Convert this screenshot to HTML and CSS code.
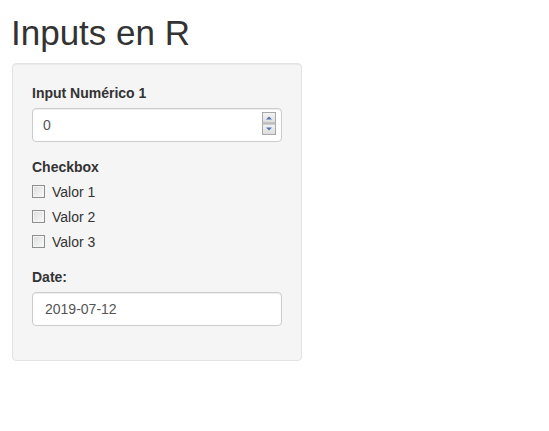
FILE: index.html
```html
<!DOCTYPE html>
<html lang="es">
<head>
<meta charset="utf-8">
<title>Inputs en R</title>
<link rel="stylesheet" href="styles.css">
</head>
<body>
<div class="page">
  <h1 class="title">Inputs en R</h1>
  <div class="well">
    <div class="form-group">
      <label class="control-label">Input Numérico 1</label>
      <div class="form-control number">
        <span>0</span>
        <svg class="spinner" width="14" height="23" viewBox="0 0 14 23">
          <defs>
            <linearGradient id="g" x1="0" y1="0" x2="0" y2="1">
              <stop offset="0" stop-color="#f4f4f4"/>
              <stop offset="1" stop-color="#dcdcdc"/>
            </linearGradient>
          </defs>
          <rect x="0.5" y="0.5" width="13" height="10.5" fill="url(#g)" stroke="#a8a8a8"/>
          <rect x="0.5" y="12" width="13" height="10.5" fill="url(#g)" stroke="#a8a8a8"/>
          <path d="M4 7.5 L7 4.5 L10 7.5 Z" fill="#4d72b8"/>
          <path d="M4 15.5 L7 18.5 L10 15.5 Z" fill="#4d72b8"/>
        </svg>
      </div>
    </div>
    <div class="form-group">
      <label class="control-label">Checkbox</label>
      <div class="options">
        <div class="check-row"><span class="box"></span><span>Valor 1</span></div>
        <div class="check-row"><span class="box"></span><span>Valor 2</span></div>
        <div class="check-row"><span class="box"></span><span>Valor 3</span></div>
      </div>
    </div>
    <div class="form-group">
      <label class="control-label">Date:</label>
      <div class="form-control date">2019-07-12</div>
    </div>
  </div>
</div>
</body>
</html>
```

FILE: styles.css
```css
html, body {
  margin: 0;
  padding: 0;
  background: #ffffff;
}
body {
  font-family: "Liberation Sans", Arial, sans-serif;
  font-size: 14px;
  line-height: 20px;
  color: #333333;
}
.page {
  padding: 0 12px;
}
.title {
  font-size: 35px;
  line-height: 1.1;
  font-weight: normal;
  margin: 14px 0 10px -1px;
  color: #333333;
}
.well {
  width: 290px;
  box-sizing: border-box;
  background: #f5f5f5;
  border: 1px solid #e3e3e3;
  border-radius: 4px;
  padding: 19px;
  box-shadow: inset 0 1px 1px rgba(0, 0, 0, 0.05);
}
.form-group {
  margin-bottom: 15px;
}
.control-label {
  display: block;
  font-weight: bold;
  margin-bottom: 5px;
}
.form-control {
  height: 34px;
  box-sizing: border-box;
  background: #ffffff;
  border: 1px solid #cccccc;
  border-radius: 4px;
  padding: 6px 12px;
  color: #555555;
  box-shadow: inset 0 1px 1px rgba(0, 0, 0, 0.075);
}
.number {
  display: flex;
  align-items: center;
  justify-content: space-between;
  padding: 0 5px 0 10px;
}
.spinner {
  display: block;
  margin-top: -2px;
}
.options {
  display: flex;
  flex-direction: column;
  gap: 5px;
}
.check-row {
  display: flex;
  align-items: center;
  height: 20px;
}
.box {
  width: 13px;
  height: 13px;
  box-sizing: border-box;
  border: 1px solid #8e8f8f;
  background: linear-gradient(135deg, #dcdcdc, #fbfbfb);
  box-shadow: inset 0 0 0 1px #f4f4f4;
  margin-right: 7px;
}
```
